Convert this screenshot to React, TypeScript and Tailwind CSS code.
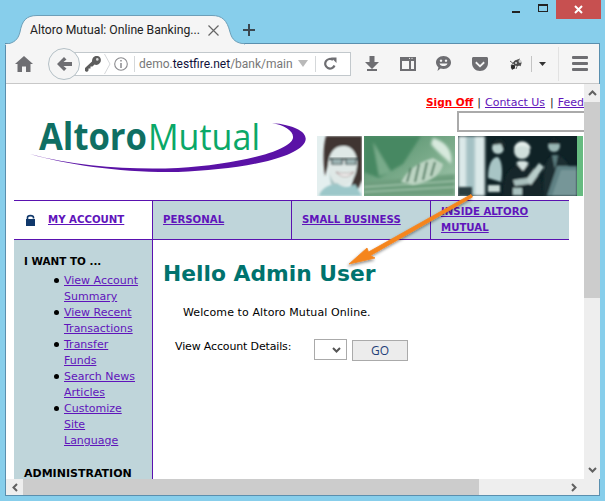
import React from "react";

const sideLinks = [
  ["View Account", "Summary"],
  ["View Recent", "Transactions"],
  ["Transfer", "Funds"],
  ["Search News", "Articles"],
  ["Customize", "Site", "Language"],
];

const Logo = () => (
  <svg width="280" height="72" viewBox="0 -10 280 72" className="block">
    <path d="M2 39 C50 52 105 55 150 53 C205 50 262 37 265 23 C266 16 256 10 244 8 C268 10 281 18 277 27 C268 45 205 55 150 57 C95 58 40 50 2 39 Z" fill="#5a12a6" />
    <text x="11" y="35" fontFamily="'Open Sans', sans-serif" fontSize="37" fontWeight="700" fill="#0f6f63" textLength="108" lengthAdjust="spacingAndGlyphs">Altoro</text>
    <text x="120" y="35" fontFamily="'Open Sans', sans-serif" fontSize="37" fill="#0aa868" textLength="112" lengthAdjust="spacingAndGlyphs">Mutual</text>
  </svg>
);

const Photos = () => (
  <svg width="266" height="60" viewBox="0 0 266 60" className="block">
    <defs>
      <filter id="soft"><feGaussianBlur stdDeviation="1.8" /></filter>
      <filter id="softer"><feGaussianBlur stdDeviation="0.8" /></filter>
      <linearGradient id="greenBg" x1="0" y1="0" x2="1" y2="1">
        <stop offset="0" stopColor="#4f8d68" />
        <stop offset="0.6" stopColor="#7fae8e" />
        <stop offset="1" stopColor="#a9cbb4" />
      </linearGradient>
      <clipPath id="p1"><rect x="0" y="0" width="45" height="60" /></clipPath>
      <clipPath id="p2"><rect x="47" y="0" width="91" height="60" /></clipPath>
      <clipPath id="p3"><rect x="141" y="0" width="119" height="60" /></clipPath>
    </defs>
    {/* woman */}
    <g clipPath="url(#p1)">
      <rect width="45" height="60" fill="#e4efef" />
      <g filter="url(#softer)">
        <path d="M9 0 H45 V44 L38 60 H30 C40 40 40 24 32 16 C24 12 16 18 12 26 L8 40 C6 26 6 10 9 0 Z" fill="#3f3533" />
        <path d="M11 32 C11 16 18 9 28 10 C38 11 41 22 40 30 C39 42 33 50 26 50 C18 50 12 42 11 32 Z" fill="#dfe8e6" />
        <path d="M2 60 C4 52 12 49 20 47 C26 52 32 52 38 48 L45 60 Z" fill="#9cc7c9" />
        <path d="M12 36 C14 44 18 48 22 50 L14 48 Z" fill="#a9c3c3" />
      </g>
      <g filter="url(#softer)" opacity="0.9">
        <path d="M12 23 H42" stroke="#1c2a2c" strokeWidth="1.6" />
        <path d="M15 23 H25 V28 H15 Z M29 23 H39 V28 H29 Z" fill="#9db6b6" stroke="#1c2a2c" strokeWidth="1.2" />
        <path d="M19 36 C24 42 32 42 37 36 C32 38 24 38 19 36 Z" fill="#fff" stroke="#8d6a6a" strokeWidth="0.7" />
      </g>
    </g>
    {/* hand on keyboard */}
    <g clipPath="url(#p2)">
      <rect x="47" width="91" height="60" fill="url(#greenBg)" />
      <g filter="url(#soft)">
        <path d="M47 0 H104 L86 28 L62 42 L47 36 Z" fill="#478862" />
        <path d="M56 6 L74 36 L62 40 Z" fill="#78ab8a" />
        <path d="M116 2 C130 6 136 16 134 28 C126 20 118 14 114 8 Z" fill="#d7e9dd" />
        <path d="M47 46 L138 38 V60 H47 Z" fill="#6e9e7e" />
      </g>
      <path d="M47 51 L138 45 M47 56 L138 51" stroke="#b5d2bd" strokeWidth="1.2" filter="url(#softer)" />
      <g filter="url(#softer)">
        <path d="M84 46 C90 34 102 26 116 22 L126 28 C124 40 110 47 96 49 Z" fill="#bcd4c2" />
        <path d="M94 32 L90 46 M102 28 L98 46 M110 26 L106 44 M118 26 L114 40" stroke="#3f7053" strokeWidth="1.8" />
      </g>
    </g>
    {/* meeting */}
    <g clipPath="url(#p3)">
      <rect x="141" width="119" height="60" fill="#0f2226" />
      <g filter="url(#soft)">
        <rect x="141" width="27" height="60" fill="#dbe9e9" />
        <rect x="149" width="9" height="60" fill="#7fa7ac" opacity="0.6" />
      </g>
      <g filter="url(#softer)">
        <circle cx="181" cy="12" r="6" fill="#b9d0cd" />
        <path d="M175 9 C178 2 186 2 188 8 L187 15 L184 8 Z" fill="#1c2a2c" />
        <path d="M171 42 C171 28 175 21 181 21 C185 25 186 35 184 46 Z" fill="#a8c5c5" />
        <circle cx="205" cy="15" r="8" fill="#cfdfdb" />
        <path d="M197 13 C198 3 212 3 214 13 C208 9 202 9 197 13 Z" fill="#e4eeeb" />
        <path d="M186 60 C186 37 194 29 205 29 C218 29 224 38 226 60 Z" fill="#14262a" />
        <path d="M199 27 L206 35 L212 27 L208 25 H202 Z" fill="#d5e3e0" />
        <path d="M208 45 L222 27 L227 31 L214 49 Z" fill="#b9cecb" />
        <path d="M196 44 L210 42 L212 48 L198 50 Z" fill="#a9c0bd" />
        <circle cx="237" cy="10" r="6" fill="#9ab6b4" />
        <path d="M231 8 C232 1 242 1 243 8 Z" fill="#122225" />
        <path d="M226 60 C226 30 230 19 238 19 C246 19 252 26 254 40 L250 60 Z" fill="#1a2d31" />
        <path d="M235 19 L238 34 L241 19 Z" fill="#5a7a7c" />
        <path d="M230 60 L240 30 H260 V60 Z" fill="#5e8184" />
        <path d="M235 60 L244 34 H260 V60 Z" fill="#8aa8aa" opacity="0.55" />
        <rect x="171" y="49" width="12" height="7" fill="#c9dad7" />
        <rect x="141" y="51" width="14" height="9" fill="#2a3d40" />
        <rect x="196" y="52" width="9" height="7" fill="#a9c2c0" />
      </g>
    </g>
    <rect x="260" width="6" height="60" fill="#66bb80" />
  </svg>
);

const Arrow = () => (
  <svg width="140" height="84" viewBox="0 0 140 84" className="absolute left-[340px] top-[190px] pointer-events-none z-20">
    <defs>
      <filter id="arrowShadow" x="-20%" y="-20%" width="140%" height="140%">
        <feDropShadow dx="-1" dy="2" stdDeviation="1.6" floodColor="#000" floodOpacity="0.45" />
      </filter>
    </defs>
    <path d="M9 74 L27 58 L28.5 62 L131 4.5 L132.5 7 L30.5 65.5 L35 68 Z" fill="#f5851f" stroke="#f5851f" strokeWidth="0.8" filter="url(#arrowShadow)" />
  </svg>
);

export default function App() {
  return (
    <div className="relative w-[605px] h-[501px] overflow-hidden bg-[#87ceeb] px-[5px] pb-[5px] flex flex-col [font-family:'Roboto',sans-serif]">
      {/* title bar */}
      <div className="relative h-[43px] shrink-0 flex items-start">
        <svg width="240" height="30" viewBox="0 0 240 30" className="absolute left-0 top-[15px] z-10">
          <path d="M0 29.5 C9 28 13 25 15 17 C17 6 21 0.5 32 0.5 H207 C217 0.5 222 5 225 17 C227 25 231 28 240 29 V30 H0 Z" fill="#f5f5f5" stroke="#6d9fb8" strokeWidth="1" />
          <rect x="0.5" y="29" width="239" height="2" fill="#f5f5f5" />
        </svg>
        <div className="absolute left-[25px] top-[20px] z-10 flex items-center text-[12.2px] leading-[20px] text-[#222] whitespace-nowrap">
          <span className="w-[178px]">Altoro Mutual: Online Banking...</span>
          <svg width="11" height="11" viewBox="0 0 11 11">
            <path d="M0.5 0.5 L10.5 10.5 M10.5 0.5 L0.5 10.5" stroke="#666" strokeWidth="1.2" />
          </svg>
        </div>
        <svg width="12" height="12" viewBox="0 0 12 12" className="absolute left-[238px] top-[24px] z-10">
          <path d="M6 0 V12 M0 6 H12" stroke="#3a4750" strokeWidth="2" />
        </svg>
        <div className="ml-auto flex items-start -mr-[1px]">
          <div className="w-[8px] h-[2px] bg-[#222] mt-[11px]" />
          <div className="w-[10px] h-[8px] border border-[#222] border-t-2 mt-[4px] ml-[18px]" />
          <div className="w-[45px] h-[19px] bg-[#c75050] ml-[8px] flex items-center justify-center">
            <svg width="9" height="9" viewBox="0 0 9 9">
              <path d="M1 1 L8 8 M8 1 L1 8" stroke="#fff" strokeWidth="2" />
            </svg>
          </div>
        </div>
      </div>

      {/* browser frame */}
      <div className="flex-1 min-h-0 flex flex-col border border-[#5a8fae] bg-white">
        <div className="h-[40px] shrink-0 bg-[#f5f5f5] border-b border-[#c8c8c8] flex items-center pl-[9px] text-[#6e6e72]">
          <svg width="18" height="16" viewBox="0 0 18 16" className="shrink-0">
            <path d="M9 0 L18 8 H15.5 V16 H11 V10.5 H7 V16 H2.5 V8 H0 Z" fill="#6e6e72" />
          </svg>
          <div className="relative z-10 w-[32px] h-[32px] ml-[15px] shrink-0 rounded-full bg-[#f5f5f5] border border-[#b4c0c6] flex items-center justify-center">
            <svg width="15" height="14" viewBox="0 0 15 14">
              <path d="M7 0 L9.5 2.5 L6.5 5 H15 V9 H6.5 L9.5 11.5 L7 14 L0 7 Z" fill="#6e6e72" />
            </svg>
          </div>
          <div className="-ml-[16px] w-[287px] h-[24px] shrink-0 bg-white border border-[#c2c8cc] flex items-center pl-[19px] overflow-hidden">
            <svg width="18" height="18" viewBox="0 0 18 18" className="shrink-0">
              <path d="M1 16 L1 13 L8 6.5 C8 2 11 0.5 13.5 1 C16.5 1.5 17.5 4.5 16.5 7 C15 10 12 10.5 10.5 9.5 L8.5 11.5 H6.5 V13.5 H4.5 V15.5 L3 17 Z" fill="#5d5d5d" />
              <circle cx="13.3" cy="4.4" r="1.3" fill="#d8d8d8" />
            </svg>
            <svg width="7" height="24" viewBox="0 0 7 24" className="shrink-0 ml-[2px]">
              <path d="M0.5 2 L6 12 L0.5 22" fill="none" stroke="#d5d8da" strokeWidth="1" />
            </svg>
            <svg width="14" height="14" viewBox="0 0 14 14" className="shrink-0 ml-[3px]">
              <circle cx="7" cy="7" r="6.3" fill="none" stroke="#8a8a8e" strokeWidth="1.1" />
              <path d="M7 3 V4.6 M7 6 V11" stroke="#8a8a8e" strokeWidth="1.5" />
            </svg>
            <div className="w-[1px] h-[16px] bg-[#d5d8da] ml-[6px] shrink-0" />
            <div className="w-[151px] ml-[4px] text-[12px] leading-[20px] whitespace-nowrap text-[#777]">
              demo.<span className="text-[#11113a]">testfire.net</span>/bank/main
            </div>
            <svg width="10" height="7" viewBox="0 0 10 7" className="shrink-0 ml-[8px]">
              <path d="M0 0 H10 L5 7 Z" fill="#b9b9b9" />
            </svg>
            <div className="w-[1px] h-[16px] bg-[#d5d8da] ml-[7px] shrink-0" />
            <svg width="13" height="13" viewBox="0 0 13 13" className="shrink-0 ml-[8px]">
              <path d="M10.5 8.5 A4.8 4.8 0 1 1 9 3" fill="none" stroke="#6e6e72" strokeWidth="2.2" />
              <path d="M7 0.5 H12.5 V6 Z" fill="#6e6e72" />
            </svg>
          </div>
          <svg width="14" height="15" viewBox="0 0 14 15" className="shrink-0 ml-[14px]">
            <path d="M4.5 0 H9.5 V6 H14 L7 13 L0 6 H4.5 Z M2 13 H12 V15 H2 Z" fill="#6e6e72" />
          </svg>
          <svg width="16" height="14" viewBox="0 0 16 14" className="shrink-0 ml-[21px]">
            <path fillRule="evenodd" d="M0 0 H16 V14 H0 Z M2 4 V12 H9 V4 Z M11 4 V12 H14 V4 Z" fill="#6e6e72" />
            <path d="M9 1.4 H10 M11.5 1.4 H12.5" stroke="#f5f5f5" strokeWidth="1" />
          </svg>
          <svg width="15" height="15" viewBox="0 0 15 15" className="shrink-0 ml-[20px]">
            <path fillRule="evenodd" d="M7.5 0 C12 0 15 3 15 6.5 C15 10 12 13 7.5 13 C6.5 13 5.5 13 4.5 12.6 L1.5 15 L2.4 11.2 C1 10 0 8.4 0 6.5 C0 3 3 0 7.5 0 Z M5 3.5 a1.2 1.2 0 1 0 .01 0 Z M10 3.5 a1.2 1.2 0 1 0 .01 0 Z M3.5 7.4 C4.5 11 10.5 11 11.5 7.4 Z" fill="#6e6e72" />
          </svg>
          <svg width="16" height="14" viewBox="0 0 16 14" className="shrink-0 ml-[21px]">
            <path fillRule="evenodd" d="M1.5 0 H14.5 C15.4 0 16 .6 16 1.5 V6 C16 10.5 12.5 14 8 14 C3.5 14 0 10.5 0 6 V1.5 C0 .6 .6 0 1.5 0 Z M4.4 4.6 L3.2 5.9 L8 10.4 L12.8 5.9 L11.6 4.6 L8 8 Z" fill="#6e6e72" />
          </svg>
          <svg width="16" height="14" viewBox="0 0 16 14" className="shrink-0 ml-[20px]">
            <path d="M3 9 C5 5 8 3 12 2 M2 4 L6 7 M8 12 L10 7 M4 13 L7 8 M13 9 L9 6" stroke="#555" strokeWidth="0.9" fill="none" />
            <ellipse cx="9.5" cy="6" rx="4" ry="3" fill="#4c4c4c" />
            <circle cx="12" cy="4.5" r="1.4" fill="#cfcfcf" />
            <circle cx="5" cy="10" r="2.2" fill="#2a2a2a" />
            <circle cx="8" cy="6" r="1" fill="#ddd" />
          </svg>
          <div className="w-[1px] h-[16px] bg-[#c4c4c4] ml-[7px] shrink-0" />
          <svg width="7" height="4" viewBox="0 0 7 4" className="shrink-0 ml-[7px]">
            <path d="M0 0 H7 L3.5 4 Z" fill="#333" />
          </svg>
          <div className="w-[1px] h-[34px] bg-[#e2e2e2] ml-[12px] shrink-0" />
          <div className="ml-[13px] w-[16px] flex flex-col gap-[3px] shrink-0">
            <div className="h-[3px] bg-[#6e6e72] rounded-[1px]" />
            <div className="h-[3px] bg-[#6e6e72] rounded-[1px]" />
            <div className="h-[3px] bg-[#6e6e72] rounded-[1px]" />
          </div>
        </div>

        <div className="flex-1 min-h-0 flex">
          {/* page */}
          <div className="w-[578px] shrink-0 overflow-hidden bg-white pl-[8px] [font-family:'DejaVu_Sans',sans-serif] text-[11px] leading-[16px] text-black">
            <div className="h-[116px] flex">
              <div className="w-[303px] shrink-0 pl-[14px] pt-[21px]">
                <Logo />
              </div>
              <div className="flex-1">
                <div className="pt-[10px] pl-[109px] whitespace-nowrap text-[#222]">
                  <a className="font-bold text-[10.5px] text-[#f00] underline">Sign Off</a>
                  <span className="ml-[4px]">|</span>
                  <a className="ml-[4px] text-[#5f14bb] underline">Contact Us</a>
                  <span className="ml-[5px]">|</span>
                  <a className="ml-[4px] text-[#5f14bb] underline">Feed</a>
                </div>
                <div className="ml-[140px] h-[21px] w-[127px] border-2 border-[#aaa] border-r-0 bg-white" />
                <div className="mt-[4px]">
                  <Photos />
                </div>
              </div>
            </div>
            <div className="flex w-[555px] h-[40px] border-y border-[#5a12b0] font-bold text-[10.2px]">
              <div className="w-[138px] shrink-0 bg-white flex items-center pl-[11px]">
                <svg width="11" height="12" viewBox="0 0 11 12">
                  <path d="M2.5 6 V3.5 C2.5 1 8.5 1 8.5 3.5 V4.5" fill="none" stroke="#10386b" strokeWidth="1.6" />
                  <rect x="1" y="5" width="9" height="7" fill="#10386b" />
                </svg>
                <a className="ml-[12px] text-[#5f14bb] underline">MY ACCOUNT</a>
              </div>
              <div className="w-[139px] shrink-0 bg-[#bfd5da] border-l border-[#5a12b0] flex items-center pl-[10px]">
                <a className="text-[#5f14bb] underline">PERSONAL</a>
              </div>
              <div className="w-[139px] shrink-0 bg-[#bfd5da] border-l border-[#5a12b0] flex items-center pl-[10px]">
                <a className="text-[#5f14bb] underline">SMALL BUSINESS</a>
              </div>
              <div className="flex-1 bg-[#bfd5da] border-l border-[#5a12b0] flex items-center pl-[10px]">
                <a className="text-[#5f14bb] underline">INSIDE ALTORO<br />MUTUAL</a>
              </div>
            </div>
            <div className="flex">
              <div className="w-[139px] h-[300px] shrink-0 bg-[#bfd5da] border-r border-[#5a12b0] pl-[10px] pt-[13px]">
                <div className="font-bold text-[10.4px]">I WANT TO ...</div>
                <ul className="mt-[4px] pl-[30px]">
                  {sideLinks.map((lines) => (
                    <li key={lines[0]} className="flex gap-[5px]">
                      <div className="w-[5px] h-[5px] mt-[5px] rounded-full bg-black shrink-0" />
                      <a className="text-[#5f14bb]">
                        {lines.map((line) => (
                          <span key={line} className="block w-fit underline">{line}</span>
                        ))}
                      </a>
                    </li>
                  ))}
                </ul>
                <div className="font-bold mt-[17px]">ADMINISTRATION</div>
              </div>
              <div className="flex-1 pl-[10px]">
                <h1 className="mt-[21px] text-[21.8px] leading-[26px] font-bold text-[#00736e] whitespace-nowrap">Hello Admin User</h1>
                <div className="mt-[18px] pl-[20px] tracking-[0.1px]">Welcome to Altoro Mutual Online.</div>
                <div className="mt-[18px] pl-[12px] flex items-start">
                  <span className="w-[139px] tracking-[-0.15px]">View Account Details:</span>
                  <div className="w-[33px] h-[21px] border border-[#aaa] bg-white flex items-center justify-end pr-[5px]">
                    <svg width="9" height="6" viewBox="0 0 9 6">
                      <path d="M1 1 L4.5 4.5 L8 1" fill="none" stroke="#555" strokeWidth="2" />
                    </svg>
                  </div>
                  <div className="ml-[5px] mt-[1px] w-[56px] h-[21px] border border-[#aaa] bg-[#ececec] flex items-center justify-center text-[#1f3f78] text-[12px] [font-family:'Open_Sans',sans-serif]">GO</div>
                </div>
              </div>
            </div>
          </div>

          {/* vertical scrollbar */}
          <div className="w-[16px] shrink-0 bg-[#eeeeee] flex flex-col">
            <div className="h-[18px] flex items-center justify-center">
              <svg width="9" height="6" viewBox="0 0 9 6">
                <path d="M1 5 L4.5 1.5 L8 5" fill="none" stroke="#606060" strokeWidth="2" />
              </svg>
            </div>
            <div className="h-[196px] bg-[#cccccc]" />
            <div className="mt-auto h-[18px] flex items-center justify-center">
              <svg width="9" height="6" viewBox="0 0 9 6">
                <path d="M1 1 L4.5 4.5 L8 1" fill="none" stroke="#606060" strokeWidth="2" />
              </svg>
            </div>
          </div>
        </div>

        {/* horizontal scrollbar */}
        <div className="h-[16px] shrink-0 bg-[#eeeeee] flex items-center">
          <div className="w-[17px] flex justify-center">
            <svg width="6" height="9" viewBox="0 0 6 9">
              <path d="M5 1 L1.5 4.5 L5 8" fill="none" stroke="#606060" strokeWidth="2" />
            </svg>
          </div>
          <div className="w-[456px] h-full bg-[#cccccc]" />
          <div className="ml-auto w-[31px] flex justify-start pl-[3px]">
            <svg width="6" height="9" viewBox="0 0 6 9">
              <path d="M1 1 L4.5 4.5 L1 8" fill="none" stroke="#606060" strokeWidth="2" />
            </svg>
          </div>
        </div>
      </div>

      <Arrow />
    </div>
  );
}
